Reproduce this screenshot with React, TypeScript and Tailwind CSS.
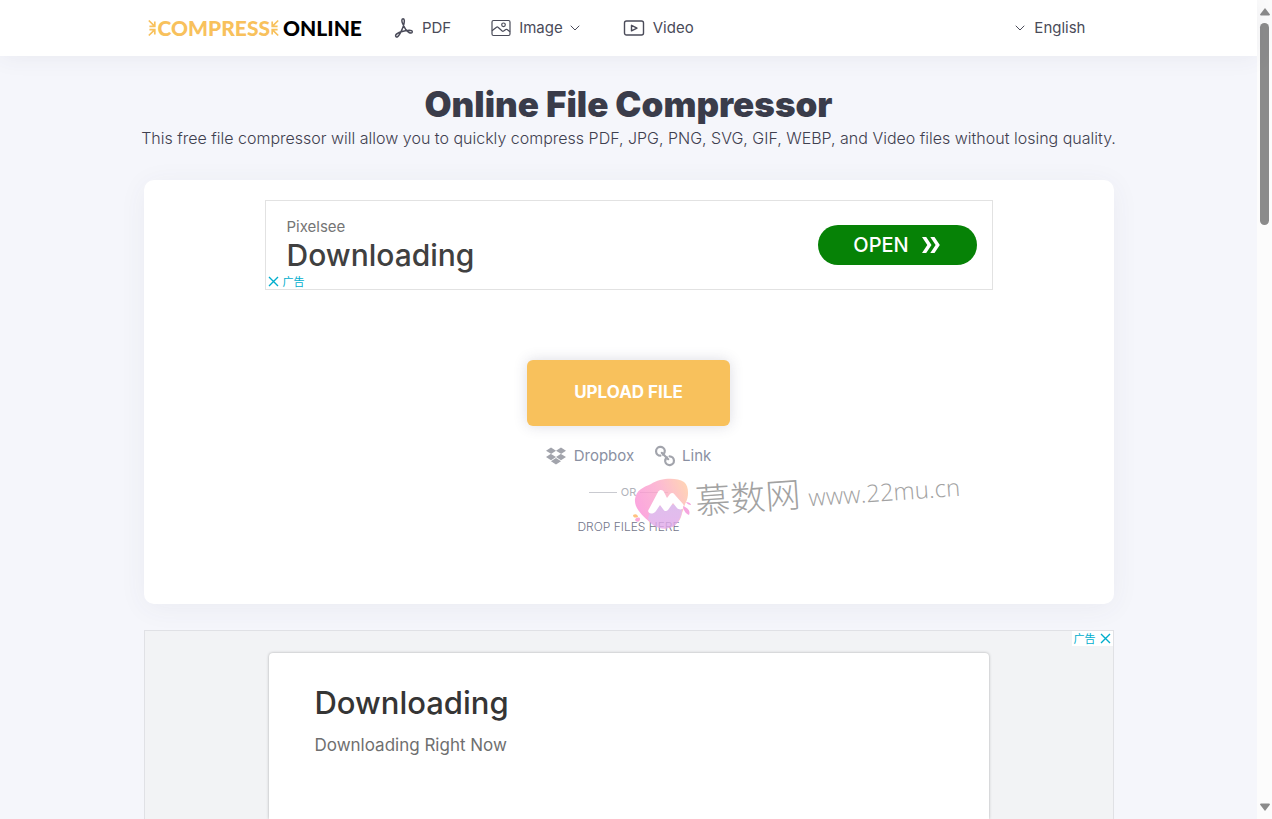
import React from 'react';
import { ChevronDown } from 'lucide-react';
import { FaDropbox } from 'react-icons/fa';

const LogoArrows = ({ flipped = false }: { flipped?: boolean }) => (
  <svg
    viewBox="0 0 9 18"
    className={flipped ? 'h-[18px] w-[9px] -scale-x-100' : 'h-[18px] w-[9px]'}
    fill="none"
    stroke="#f8c15c"
    strokeWidth="1.7"
    aria-hidden="true"
  >
    <path d="M.8 1.500 6 6.600M6.800 2.400V7.400H1.400" />
    <path d="M.8 16.500 6 11.400M6.800 15.600V10.600H1.400" />
  </svg>
);

const PdfIcon = () => (
  <svg viewBox="0 0 20 22" className="h-[22px] w-5" fill="none" stroke="currentColor" strokeWidth="1.5" strokeLinejoin="round" aria-hidden="true">
    <path d="M8.800 6.800C7.600 4.500 7.400 1.800 9 1.700c1.600 0 1.500 2.500 1 4.900-.4 2.200-1.300 4.600-2.600 7.200-1.200 2.400-2.500 4.900-3.700 5.800-1.300 1-2.600-.3-1.900-1.700.7-1.300 3-2.400 5.400-3.200 3-.9 5.700-1.300 8.200-1.400 1.700 0 3 .5 2.900 1.700-.2 1.300-1.900 1.200-3.300.5-2.700-1.400-4.800-5-6.200-8.700Z" />
  </svg>
);

const ImageIcon = () => (
  <svg viewBox="0 0 20 18" className="h-[18px] w-5" fill="none" stroke="currentColor" strokeWidth="1.2" strokeLinejoin="round" aria-hidden="true">
    <rect x="1" y="1.500" width="18" height="15" rx="1.500" />
    <circle cx="12.500" cy="5.800" r="1.800" />
    <path d="M1 11.800 5.500 8.200c.6-.4 1-.4 1.500.1l4.200 3.700c.5.4.9.4 1.400.1l2.200-1.600c.5-.3.900-.3 1.300 0l2.900 2.300" />
  </svg>
);

const VideoIcon = () => (
  <svg viewBox="0 0 22 18" className="h-[18px] w-[22px]" fill="none" stroke="currentColor" strokeWidth="1.400" strokeLinejoin="round" aria-hidden="true">
    <rect x="1.500" y="2" width="19" height="14" rx="2" />
    <path d="M8.500 6.300v5.600L14 9.100Z" />
  </svg>
);

const ChainIcon = () => (
  <svg viewBox="0 0 22 22" className="h-[22px] w-[22px]" fill="none" stroke="currentColor" strokeWidth="2.200" strokeLinecap="round" aria-hidden="true">
    <path d="M6.400 10.700A4.400 4.400 0 1 1 10.800 5.600c.2 1.800-.6 3-1.800 3.900" />
    <path d="M15.600 11.300a4.400 4.400 0 1 1-4.400 5.100c-.2-1.800.6-3 1.800-3.900" />
    <path d="m7.800 7.800 6.400 6.400" />
  </svg>
);

const CloseIcon = () => (
  <svg viewBox="0 0 11 11" className="h-[11px] w-[11px]" fill="none" stroke="currentColor" strokeWidth="1.400" aria-hidden="true">
    <path d="m1 1 9 9M10 1l-9 9" />
  </svg>
);

const WatermarkLogo = () => (
  <svg viewBox="0 0 60 56" className="h-14 w-[60px]" aria-hidden="true">
    <defs>
      <linearGradient id="blobPink" x1="0" y1="0.6" x2="1" y2="0.2">
        <stop offset="0%" stopColor="#fb8fd8" />
        <stop offset="55%" stopColor="#fca9c9" />
        <stop offset="100%" stopColor="#ffc9a5" />
      </linearGradient>
      <linearGradient id="blobViolet" x1="0" y1="0" x2="0" y2="1">
        <stop offset="0%" stopColor="#d6aee8" />
        <stop offset="100%" stopColor="#e3a9ea" />
      </linearGradient>
    </defs>
    <g opacity="0.8">
      <path d="M20 8C29 2 45 1 53 6c5 4 5 14 2 20-2 4-2 7-4 11-1 6-4 10-8 13-6 4-16 3-22-2C13 41 3 33 4 23 5 14 13 11 20 8Z" fill="url(#blobPink)" />
      <path d="M20 31 47 28l4 5c0 7-4 14-8 17-6 4-17 3-22-2l-4-5Z" fill="url(#blobViolet)" />
    </g>
    <path d="M18 33 27 16c2-3 5-2 6 0l3 6 3-4c2-2 4-1 5 1l8 9c3 5-3 7-6 4l-4-5-5 7c-2 2-4 1-5-1l-3-4-4 6c-4 5-10 2-7-2Z" fill="#fff" />
    <path d="M2 39c3-2 5 0 5 2-2 1-5 1-5-2Z" fill="#ffc27f" />
    <path d="M4 44c1-3 5-3 5-1 0 3-3 4-5 1Z" fill="#fba9da" />
    <path d="M52 30c4 2 8 4 6 9-3-1-6-5-6-9ZM55 26c2 0 5 1 5 3-2 0-4-1-5-3Z" fill="#f6a6df" />
  </svg>
);

const AdBadge = ({ closeFirst = false }: { closeFirst?: boolean }) => (
  <button
    type="button"
    className={`absolute flex h-[15px] items-center gap-1 bg-white px-0.5 font-['Noto_Sans_CJK_SC',sans-serif] text-[11px] leading-[15px] text-[#00aecd] ${
      closeFirst ? 'bottom-0 left-0' : 'top-0 right-0 flex-row-reverse'
    }`}
  >
    <CloseIcon />
    <span>广告</span>
  </button>
);

const Header = () => (
  <header className="relative z-10 h-14 bg-white shadow-[0_0_24px_rgba(60,60,100,0.08)]">
    <div className="mx-auto flex h-full max-w-[970px] items-center px-1 text-[15px] text-[#4a4b59]">
      <a href="#" className="flex items-center font-['Lato',sans-serif] text-[21px] font-black" aria-label="Compress Online">
        <LogoArrows />
        <span className="ml-px text-[#f8c15c]">COMPRESS</span>
        <LogoArrows flipped />
        <span className="ml-1 text-black">ONLINE</span>
      </a>
      <nav className="ml-8 flex items-center gap-10">
        <a href="#pdf" className="flex items-center gap-2">
          <PdfIcon />
          PDF
        </a>
        <button type="button" className="flex items-center gap-2">
          <ImageIcon />
          <span>Image</span>
          <ChevronDown size={16} strokeWidth={1.5} className="-ml-1" />
        </button>
        <a href="#video" className="flex items-center gap-2">
          <VideoIcon />
          Video
        </a>
      </nav>
      <button type="button" className="mr-6 ml-auto flex items-center gap-1.5">
        <ChevronDown size={16} strokeWidth={1.5} />
        English
      </button>
    </div>
  </header>
);

const Watermark = () => (
  <div className="pointer-events-none absolute top-74 left-1/2 ml-0.5 flex items-start whitespace-nowrap">
    <WatermarkLogo />
    <div className="-mt-1.5 ml-1 flex -rotate-4 items-end gap-2 text-[#a2a2a2]">
      <span className="font-['Noto_Sans_CJK_SC',sans-serif] text-[35px] leading-10 font-light">慕数网</span>
      <span className="font-['Open_Sans',sans-serif] text-2xl leading-7 font-light">www.22mu.cn</span>
    </div>
  </div>
);

const Uploader = () => (
  <section className="relative mt-7 flex flex-col items-center rounded-[10px] bg-white px-5 pt-5 pb-[69px] shadow-[0_4px_28px_rgba(60,60,100,0.06)]">
    <div className="relative flex h-[90px] w-full max-w-[728px] items-center justify-between border border-[#e2e2e2] pr-[15px] pl-[21px]">
      <div>
        <p className="text-[15px] leading-5 text-[#757575]">Pixelsee</p>
        <p className="text-3xl font-medium text-[#404040]">Downloading</p>
      </div>
      <a href="#open" className="flex h-10 w-[159px] items-center justify-center gap-3 rounded-full bg-[#068206] text-xl font-medium text-white">
        OPEN
        <svg viewBox="0 0 20 18" className="h-[18px] w-5" fill="currentColor" aria-hidden="true">
          <path d="M1 1h4.200l5.300 8-5.300 8H1l5.300-8ZM9.300 1h4.200l5.300 8-5.300 8H9.300l5.300-8Z" />
        </svg>
      </a>
      <AdBadge closeFirst />
    </div>

    <button type="button" className="mt-[70px] h-[66px] w-[203px] rounded-md bg-[#f8c15c] text-[17px] font-bold text-white shadow-[0_0_14px_rgba(60,60,100,0.18)]">
      UPLOAD FILE
    </button>
    <div className="mt-[18px] flex h-6 items-center gap-5 text-[15px] text-[#8a90a2]">
      <button type="button" className="flex items-center gap-2">
        <FaDropbox size={20} className="text-[#a2a4ac]" />
        Dropbox
      </button>
      <button type="button" className="flex items-center gap-1.5">
        <span className="text-[#a2a4ac]"><ChainIcon /></span>
        Link
      </button>
    </div>
    <div className="mt-4 flex items-center gap-1 text-[11px] leading-4 text-[#b0b2ba]">
      <span className="h-px w-7 bg-[#c9cad0]" />
      OR
      <span className="h-px w-7 bg-[#c9cad0]" />
    </div>
    <p className="mt-[19px] text-xs leading-4 font-light text-[#73768a]">DROP FILES HERE</p>
    <Watermark />
  </section>
);

const BottomAd = () => (
  <section className="relative mt-[26px] flex flex-1 justify-center border border-b-0 border-[#e0e1e5] bg-[#f2f3f5] px-5 pt-[22px]">
    <div className="w-full max-w-[720px] rounded-t bg-white px-[46px] pt-7 shadow-[0_0_3px_rgba(0,0,0,0.3)]">
      <h2 className="text-[31px] leading-11 font-medium text-[#353535]">Downloading</h2>
      <p className="mt-2 text-[17px] leading-6 text-[#6f6f6f]">Downloading Right Now</p>
    </div>
    <AdBadge />
  </section>
);

const Scrollbar = () => (
  <div className="flex w-[15px] shrink-0 flex-col items-center bg-[#fcfcfc] py-2" aria-hidden="true">
    <svg viewBox="0 0 10 8" className="h-2 w-[10px]" fill="#8b8b8b">
      <path d="M5 0 10 6.500Q9.800 7.500 9 7.500H1Q.2 7.500 0 6.500Z" />
    </svg>
    <div className="mt-[7px] h-[202px] w-[9px] rounded-full bg-[#8b8b8b]" />
    <svg viewBox="0 0 10 8" className="mt-auto h-2 w-[10px]" fill="#8b8b8b">
      <path d="M5 8 10 1.500Q9.800.5 9 .5H1Q.2.5 0 1.500Z" />
    </svg>
  </div>
);

export default function App() {
  return (
    <div className="flex h-screen overflow-hidden bg-[#f5f6fb] font-['Inter',sans-serif]">
      <div className="flex min-w-0 flex-1 flex-col">
        <Header />
        <main className="mx-auto flex w-full max-w-[970px] flex-1 flex-col pt-7">
          <h1 className="text-center text-[35px] leading-10 font-black text-[#3a3c4a]">Online File Compressor</h1>
          <p className="-mx-5 text-center text-base leading-7 font-light text-[#3f404f]">
            This free file compressor will allow you to quickly compress PDF, JPG, PNG, SVG, GIF, WEBP, and Video files without losing quality.
          </p>
          <Uploader />
          <BottomAd />
        </main>
      </div>
      <Scrollbar />
    </div>
  );
}
